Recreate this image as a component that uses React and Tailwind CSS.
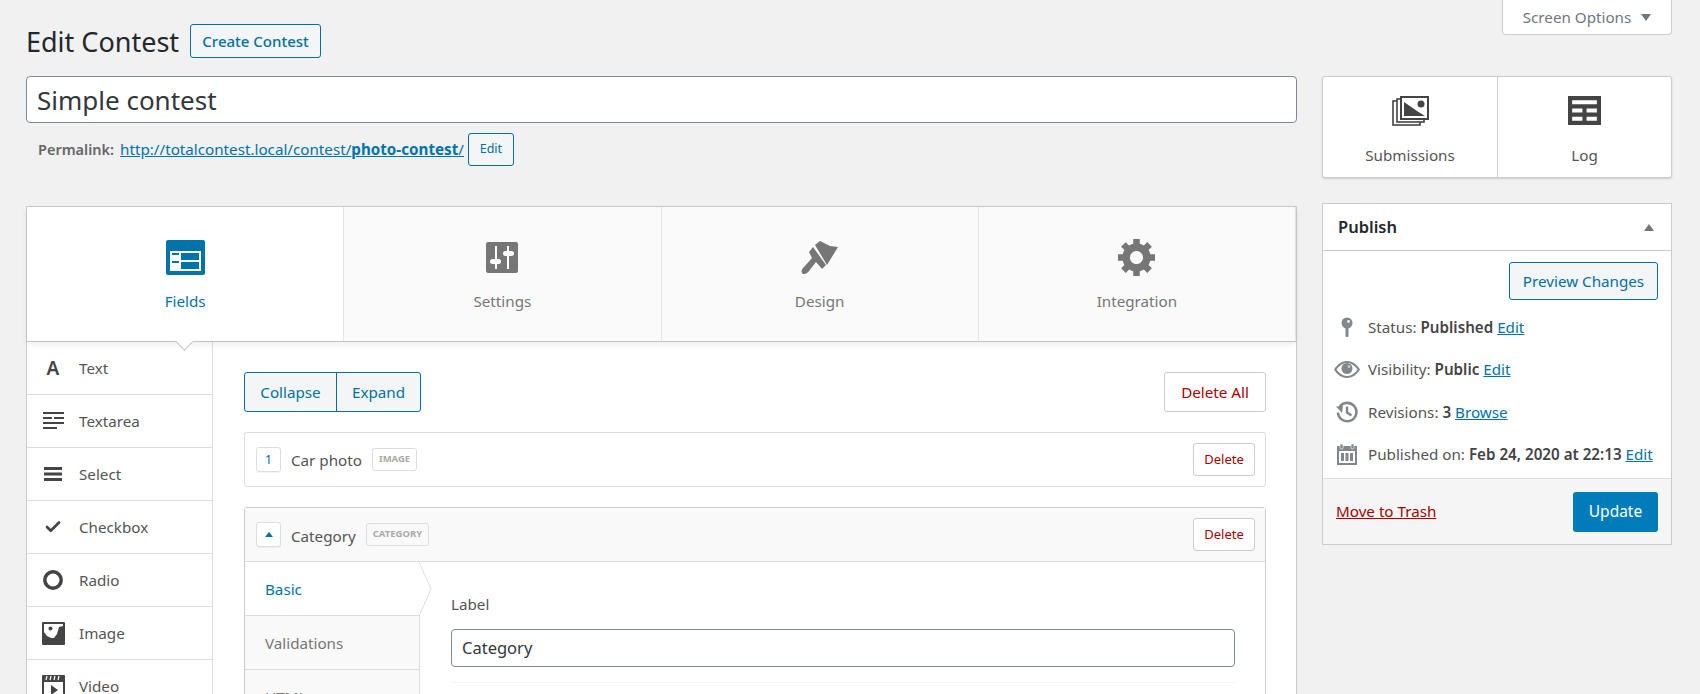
import { Check } from 'lucide-react';

const ICON_GRAY = '#767676';
const DARK = '#444444';

const FieldsIcon = () => (
    <svg width="39" height="35" viewBox="0 0 39 35">
        <rect width="39" height="35" rx="2" fill="#0073aa" />
        <rect x="4" y="11" width="31" height="20" fill="#fff" />
        <rect x="6" y="13" width="7" height="2" fill="#0073aa" />
        <rect x="6" y="21" width="7" height="2" fill="#0073aa" />
        <rect x="15" y="13" width="18" height="7" fill="#0073aa" />
        <rect x="15" y="22" width="18" height="7" fill="#0073aa" />
    </svg>
);

const SettingsIcon = () => (
    <svg width="32" height="31" viewBox="0 0 32 31">
        <rect width="32" height="31" rx="2" fill={ICON_GRAY} />
        <path d="M10 4v23M22 4v23" stroke="#fff" strokeWidth="2" />
        <rect x="4" y="17" width="11" height="5" rx="2.5" fill="#fff" />
        <rect x="17" y="9" width="11" height="5" rx="2.5" fill="#fff" />
    </svg>
);

const BrushIcon = () => (
    <svg width="37" height="33" viewBox="0 0 37 33">
        <path d="M14 4 L19 0 L29 5 L37 6 L26 24 Z" fill={ICON_GRAY} />
        <path d="M12 6 L25 24 L21 28 L15 21 L8 30 C6 33 2 34 1 32 C0 30 1 28 3 26 L11 17 L8 11 Z" fill={ICON_GRAY} />
    </svg>
);

const GearIcon = () => (
    <svg width="37" height="37" viewBox="1 2 17 17">
        <path fill={ICON_GRAY} d="M18 12h-2.18c-.17.7-.44 1.35-.81 1.93l1.54 1.54-2.1 2.1-1.54-1.54c-.58.36-1.23.63-1.91.79V19H8v-2.18c-.68-.16-1.33-.43-1.91-.79l-1.54 1.54-2.12-2.12 1.54-1.54c-.36-.58-.63-1.23-.79-1.91H1V9.03h2.17c.16-.7.44-1.35.8-1.94L2.43 5.55l2.1-2.1 1.54 1.54c.58-.37 1.24-.64 1.93-.81V2h3v2.18c.68.16 1.33.43 1.91.79l1.54-1.54 2.12 2.12-1.54 1.54c.36.59.64 1.24.8 1.94H18V12zm-8.5 1.5c1.66 0 3-1.34 3-3s-1.34-3-3-3-3 1.34-3 3 1.34 3 3 3z" />
    </svg>
);

const PhotosIcon = () => (
    <svg width="37" height="30" viewBox="0 0 37 30" fill="none">
        <rect x="1" y="5" width="27" height="24" fill="#fff" stroke={DARK} strokeWidth="1.6" />
        <rect x="5" y="3" width="27" height="23" fill="#fff" stroke={DARK} strokeWidth="1.6" />
        <rect x="9" y="1" width="27" height="22" fill="#fff" stroke={DARK} strokeWidth="2" />
        <path d="M12 6 L25 15 L33 20 L12 20 Z" fill={DARK} />
        <circle cx="29" cy="8" r="3.5" fill={DARK} />
    </svg>
);

const TableIcon = () => (
    <svg width="33" height="29" viewBox="2 3 16 14">
        <path fillRule="evenodd" fill={DARK} d="M18 17V3H2v14h16zM16 7H4V5h12v2zm-7 4H4V9h5v2zm7 0h-5V9h5v2zm-7 4H4v-2h5v2zm7 0h-5v-2h5v2z" />
    </svg>
);

const PinIcon = () => (
    <svg width="14" height="20" viewBox="0 0 14 20">
        <circle cx="7" cy="6" r="5.5" fill="#82878c" />
        <circle cx="8.5" cy="4.5" r="1.4" fill="#fff" />
        <rect x="5.5" y="10" width="3" height="10" rx="1" fill="#82878c" />
    </svg>
);

const EyeIcon = () => (
    <svg width="26" height="17" viewBox="0 0 26 17">
        <path fill="#82878c" d="M13 0C7 0 3 4 0 8.500 3 13 7 17 13 17s10-4 13-8.500C23 4 19 0 13 0z" />
        <path fill="#fff" d="M13 2C8.500 2 5 5 2.500 8.500 5 12 8.500 15 13 15s8-3 10.500-6.500C21 5 17.500 2 13 2z" />
        <circle cx="13" cy="7.500" r="5.500" fill="#82878c" />
        <circle cx="15" cy="5.500" r="1.300" fill="#d5d7d9" />
    </svg>
);

const HistoryIcon = () => (
    <svg width="22" height="22" viewBox="0 0 22 22" fill="none" stroke="#82878c">
        <path d="M3.500 6A9.200 9.200 0 1 1 2 11.500" strokeWidth="2.600" />
        <path d="M0 5.500 L7 5 L6 12 Z" fill="#82878c" stroke="none" />
        <path d="M11 5.500V11.500L15.500 14.500" strokeWidth="2.400" />
    </svg>
);

const CalendarIcon = () => (
    <svg width="20" height="21" viewBox="0 0 20 21">
        <rect y="2" width="20" height="19" fill="#82878c" />
        <rect x="2" y="7" width="16" height="12" fill="#fff" />
        <rect x="3" y="0" width="3" height="5" rx="1" fill="#82878c" stroke="#fff" strokeWidth="0.6" />
        <rect x="14" y="0" width="3" height="5" rx="1" fill="#82878c" stroke="#fff" strokeWidth="0.6" />
        <rect x="4" y="9" width="3" height="8" fill="#82878c" />
        <rect x="8.500" y="9" width="3" height="8" fill="#82878c" />
        <rect x="13" y="9" width="3" height="8" fill="#82878c" />
    </svg>
);

const TextareaIcon = () => (
    <svg width="21" height="18" viewBox="0 0 21 18" fill={DARK}>
        <rect width="21" height="2" />
        <rect y="5" width="9" height="2" />
        <rect x="11" y="5" width="10" height="2" />
        <rect y="10" width="21" height="2" />
        <rect y="15" width="14" height="2" />
    </svg>
);

const SelectIcon = () => (
    <svg width="18" height="14" viewBox="0 0 18 14" fill={DARK}>
        <rect width="18" height="3" />
        <rect y="5.500" width="18" height="3" />
        <rect y="11" width="18" height="3" />
    </svg>
);

const RadioIcon = () => (
    <svg width="20" height="20" viewBox="0 0 20 20" fill="none">
        <circle cx="10" cy="10" r="8.200" stroke={DARK} strokeWidth="3.500" />
    </svg>
);

const ImageIcon = () => (
    <svg width="23" height="23" viewBox="0 0 23 23">
        <rect width="23" height="23" rx="1" fill={DARK} />
        <rect x="2" y="2" width="19" height="19" fill="#fff" />
        <circle cx="8.500" cy="6.500" r="2" fill={DARK} />
        <path d="M2 21V10l3 4 4 2h3l3-4 2-7 4-1V21z" fill={DARK} />
    </svg>
);

const VideoIcon = () => (
    <svg width="23" height="23" viewBox="0 0 23 23">
        <rect width="23" height="23" rx="1" fill={DARK} />
        <rect x="2" y="7" width="19" height="16" fill="#fff" />
        <path d="M5 1l-1 4M9 1L8 5M13 1l-1 4M17 1l-1 4" stroke="#fff" strokeWidth="1.200" />
        <path d="M9 10l7 5-7 5z" fill={DARK} />
    </svg>
);

const tabs = [
    { label: 'Fields', icon: <FieldsIcon />, active: true },
    { label: 'Settings', icon: <SettingsIcon /> },
    { label: 'Design', icon: <BrushIcon /> },
    { label: 'Integration', icon: <GearIcon /> },
];

const fieldTypes = [
    { label: 'Text', icon: <span className="text-[19px] font-semibold leading-none text-[#444]">A</span> },
    { label: 'Textarea', icon: <TextareaIcon /> },
    { label: 'Select', icon: <SelectIcon /> },
    { label: 'Checkbox', icon: <Check size={18} strokeWidth={3.5} color={DARK} /> },
    { label: 'Radio', icon: <RadioIcon /> },
    { label: 'Image', icon: <ImageIcon /> },
    { label: 'Video', icon: <VideoIcon /> },
];

const publishRows = [
    { icon: <PinIcon />, text: 'Status: ', bold: 'Published', link: 'Edit', h: 'h-[42px]' },
    { icon: <EyeIcon />, text: 'Visibility: ', bold: 'Public', link: 'Edit', h: 'h-[43px]' },
    { icon: <HistoryIcon />, text: 'Revisions: ', bold: '3', link: 'Browse', h: 'h-[42px]' },
    { icon: <CalendarIcon />, text: 'Published on: ', bold: 'Feb 24, 2020 at 22:13', link: 'Edit', h: 'h-[42px]' },
];

const DeleteButton = () => (
    <button className="h-[33px] w-[62px] rounded-[3px] border border-[#cccccc] bg-white text-[13px] text-[#a00]">Delete</button>
);

const TypeTag = ({ children }) => (
    <span className="ml-[10px] flex h-[23px] items-center rounded-[3px] border border-[#dddddd] px-[6px] text-[9.500px] font-bold text-[#aaaaaa]">{children}</span>
);

const App = () => {
    return (
        <div className="flex h-[694px] gap-[24px] overflow-hidden bg-[#f1f1f1] pl-[26px] font-['Noto_Sans',sans-serif] text-[15.200px] text-[#444]">
            {/* LEFT COLUMN */}
            <div className="w-[1272px] shrink-0 pt-[24px]">
                <div className="flex h-[34px] items-center">
                    <h1 className="text-[27px] leading-none text-[#23282d]">Edit Contest</h1>
                    <button className="ml-[11px] h-[34px] w-[131px] rounded-[3px] border border-[#0071a1] bg-[#f3f5f6] text-[15px] font-medium text-[#0071a1]">Create Contest</button>
                </div>

                <div className="mt-[18px] flex h-[47px] w-[1271px] items-center rounded-[4px] border border-[#7e8993] bg-white px-[10px] pt-[2px] text-[26px] text-[#32373c]">Simple contest</div>

                <div className="mt-[10px] flex h-[33px] items-center pl-[12px]">
                    <span className="text-[14.500px] font-semibold text-[#666]">Permalink:</span>
                    <a className="ml-[6px] text-[#0073aa] underline" href="#">http://totalcontest.local/contest/<b>photo-contest</b>/</a>
                    <button className="ml-[4px] h-[33px] w-[46px] rounded-[3px] border border-[#0071a1] bg-[#f3f5f6] text-[12.500px] text-[#0071a1]">Edit</button>
                </div>

                {/* MAIN PANEL */}
                <div className="mt-[40px] h-[600px] w-[1271px] border border-[#cccccc] bg-white">
                    <div className="relative flex h-[135px] border-b border-[#c4c4c4] shadow-[0_2px_6px_rgba(0,0,0,0.08)]">
                        {tabs.map(tab => (
                            <div key={tab.label} className={`flex flex-1 flex-col items-center border-r border-[#e5e5e5] last:border-r-0 ${tab.active ? 'bg-white text-[#0073aa]' : 'bg-[#fafafa] text-[#767676]'}`}>
                                <div className="mt-[31px] flex h-[39px] items-center">{tab.icon}</div>
                                <span className="mt-[13px]">{tab.label}</span>
                            </div>
                        ))}
                        <div className="absolute -bottom-[7px] left-[151px] h-[13px] w-[13px] rotate-45 border-r border-b border-[#c4c4c4] bg-white" />
                    </div>

                    <div className="flex">
                        {/* FIELD TYPES */}
                        <div className="w-[186px] shrink-0 border-r border-[#dddddd]">
                            {fieldTypes.map(f => (
                                <div key={f.label} className="flex h-[53px] items-center border-b border-[#dddddd]">
                                    <div className="flex w-[52px] justify-center">{f.icon}</div>
                                    <span className="text-[#555]">{f.label}</span>
                                </div>
                            ))}
                        </div>

                        {/* FIELDS */}
                        <div className="flex-1 pt-[30px] pr-[30px] pl-[31px]">
                            <div className="flex justify-between">
                                <div className="flex h-[40px] rounded-[3px] border border-[#0071a1] bg-[#f3f5f6] text-[#0071a1]">
                                    <button className="w-[92px] border-r border-[#0071a1]">Collapse</button>
                                    <button className="w-[83px]">Expand</button>
                                </div>
                                <button className="h-[40px] w-[102px] rounded-[3px] border border-[#cccccc] bg-white text-[#a00]">Delete All</button>
                            </div>

                            <div className="mt-[20px] flex h-[55px] items-center justify-between rounded-[3px] border border-[#dddddd] bg-white pr-[10px] pl-[11px]">
                                <div className="flex items-center">
                                    <span className="flex h-[25px] w-[25px] items-center justify-center rounded-[3px] border border-[#dddddd] text-[13px] text-[#0073aa] shadow-[0_1px_1px_rgba(0,0,0,0.05)]">1</span>
                                    <span className="mt-[2px] ml-[10px] text-[#555]">Car photo</span>
                                    <TypeTag>IMAGE</TypeTag>
                                </div>
                                <DeleteButton />
                            </div>

                            <div className="mt-[20px] h-[200px] rounded-t-[3px] border border-[#cccccc]">
                                <div className="flex h-[54px] items-center justify-between border-b border-[#dddddd] bg-[#f9f9f9] pr-[10px] pl-[11px]">
                                    <div className="flex items-center">
                                        <span className="flex h-[25px] w-[25px] items-center justify-center rounded-[3px] border border-[#dddddd] bg-white shadow-[0_1px_1px_rgba(0,0,0,0.05)]">
                                            <span className="h-0 w-0 border-x-[4px] border-b-[5px] border-x-transparent border-b-[#0073aa]" />
                                        </span>
                                        <span className="mt-[3px] ml-[10px] text-[#555]">Category</span>
                                        <TypeTag>CATEGORY</TypeTag>
                                    </div>
                                    <DeleteButton />
                                </div>

                                <div className="flex">
                                    <div className="w-[175px] shrink-0">
                                        <div className="relative flex h-[54px] items-center border-b border-[#dddddd] bg-white pt-[2px] pl-[20px] text-[#0073aa]">
                                            Basic
                                            <svg className="absolute top-0 -right-[12px]" width="13" height="54" viewBox="0 0 13 54" fill="none">
                                                <path d="M0 0L12 27L0 54" stroke="#dddddd" />
                                            </svg>
                                        </div>
                                        <div className="flex h-[54px] items-center border-r border-b border-[#dddddd] bg-[#f9f9f9] pt-[2px] pl-[20px] text-[#767676]">Validations</div>
                                        <div className="flex h-[54px] items-center border-r border-[#dddddd] bg-[#f9f9f9] pl-[20px] text-[#767676]">HTML</div>
                                    </div>
                                    <div className="flex-1 pt-[32px] pr-[30px] pl-[31px]">
                                        <div className="leading-[20px] text-[#555]">Label</div>
                                        <div className="mt-[15px] flex h-[38px] items-center rounded-[4px] border border-[#7e8993] bg-white pl-[10px] text-[16.500px] text-[#32373c]">Category</div>
                                        <div className="mt-[15px] border-t border-[#f5f5f5]" />
                                    </div>
                                </div>
                            </div>
                        </div>
                    </div>
                </div>
            </div>

            {/* RIGHT COLUMN */}
            <div className="w-[350px] shrink-0">
                <div className="ml-[180px] flex h-[35px] w-[170px] items-center justify-center gap-[10px] rounded-b-[4px] border border-t-0 border-[#cccccc] bg-white text-[#72777c]">
                    Screen Options
                    <span className="h-0 w-0 border-x-[5px] border-t-[7px] border-x-transparent border-t-[#72777c]" />
                </div>

                <div className="mt-[41px] flex h-[102px] rounded-[3px] border border-[#cccccc] bg-white shadow-[0_1px_2px_rgba(0,0,0,0.15)]">
                    <div className="flex w-[175px] flex-col items-center border-r border-[#cccccc] text-[#555]">
                        <div className="mt-[19px] h-[30px]"><PhotosIcon /></div>
                        <span className="mt-[18px]">Submissions</span>
                    </div>
                    <div className="flex flex-1 flex-col items-center text-[#555]">
                        <div className="mt-[19px] h-[30px]"><TableIcon /></div>
                        <span className="mt-[18px]">Log</span>
                    </div>
                </div>

                <div className="mt-[25px] border border-[#cccccc] bg-white">
                    <div className="flex h-[47px] items-center justify-between border-b border-[#cccccc] pr-[17px] pl-[15px]">
                        <span className="text-[16.500px] font-semibold text-[#23282d]">Publish</span>
                        <span className="h-0 w-0 border-x-[5px] border-b-[7px] border-x-transparent border-b-[#72777c]" />
                    </div>

                    <div className="flex justify-end pt-[11px] pr-[13px]">
                        <button className="h-[38px] w-[149px] rounded-[3px] border border-[#0071a1] bg-[#f3f5f6] text-[#0071a1]">Preview Changes</button>
                    </div>

                    <div className="pt-[6px]">
                        {publishRows.map(row => (
                            <div key={row.link + row.text} className={`flex items-center ${row.h}`}>
                                <div className="flex w-[45px] justify-center pl-[3px]">{row.icon}</div>
                                <span className="whitespace-pre text-[#555]">{row.text}<b className="font-semibold text-[#444]">{row.bold}</b> <a className="text-[#0073aa] underline" href="#">{row.link}</a></span>
                            </div>
                        ))}
                    </div>

                    <div className="mt-[3px] flex h-[66px] items-center justify-between border-t border-[#dddddd] bg-[#f5f5f5] pr-[13px] pl-[13px]">
                        <a className="text-[#a00] underline" href="#">Move to Trash</a>
                        <button className="h-[40px] w-[85px] rounded-[3px] bg-[#007cba] text-[15.500px] text-white">Update</button>
                    </div>
                </div>
            </div>
        </div>
    );
};

export default App;
